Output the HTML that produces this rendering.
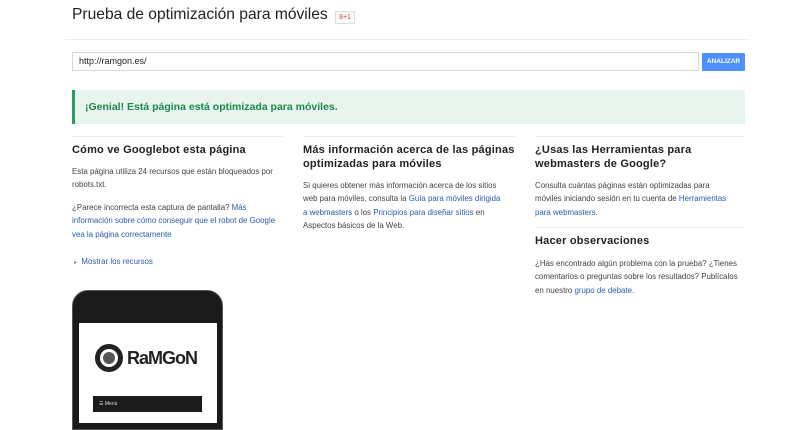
<!DOCTYPE html>
<html><head><meta charset="utf-8"><style>
body{margin:0;width:810px;height:421px;overflow:hidden;background:#fff;font-family:"Liberation Sans",Arial,sans-serif;color:#333;position:relative}
.a{position:absolute}
h1{position:absolute;left:72px;top:6px;margin:0;font-weight:normal;font-size:15.6px;color:#222;white-space:nowrap}
.g1{position:absolute;left:335px;top:11px;width:18px;height:11px;border:1px solid #ddd;font-size:7px;color:#d14836;text-align:center;line-height:11px;background:#fafafa}
.hr{position:absolute;height:1px;background:#eee}
.inp{left:72px;top:52px;width:619px;height:17px;border:1px solid #d9d9d9;font-size:9px;line-height:17px;padding-left:6px;color:#222}
.btn{left:702px;top:53px;width:43px;height:18px;background:#4d90fe;color:#fff;font-size:6.5px;font-weight:bold;text-align:center;line-height:18px;border-radius:1px}
.ok{left:72px;top:90px;height:34px;background:#e8f5ef;border-left:3px solid #23a05e;font-weight:bold;font-size:10.5px;color:#198a4a;line-height:34px;padding-left:10px;box-sizing:border-box;width:673px}
h3{position:absolute;margin:0;font-size:11px;font-weight:bold;color:#222;line-height:14px;letter-spacing:.2px}
p{position:absolute;margin:0;font-size:7.9px;line-height:13.3px;color:#444}
a{color:#2a5db0;text-decoration:none}
</style></head><body>
<h1>Prueba de optimización para móviles</h1>
<div class="g1">8+1</div>
<div class="hr" style="left:65px;top:39px;width:685px"></div>
<div class="a inp">http://ramgon.es/</div>
<div class="a btn">ANALIZAR</div>
<div class="a ok">¡Genial! Está página está optimizada para móviles.</div>

<div class="hr" style="left:72px;top:136px;width:211px"></div>
<div class="hr" style="left:303px;top:136px;width:212px"></div>
<div class="hr" style="left:535px;top:136px;width:210px"></div>
<div class="hr" style="left:535px;top:227px;width:210px"></div>

<h3 style="left:72px;top:143px">Cómo ve Googlebot esta página</h3>
<p style="left:72px;top:165px;width:212px">Esta página utiliza 24 recursos que están bloqueados por robots.txt.</p>
<p style="left:72px;top:201px;width:208px">¿Parece incorrecta esta captura de pantalla? <a>Más información sobre cómo conseguir que el robot de Google vea la página correctamente</a></p>
<p style="left:74px;top:255px"><span style="color:#888;font-size:6px">▸</span> &nbsp;<a>Mostrar los recursos</a></p>

<h3 style="left:303px;top:143px;width:220px">Más información acerca de las páginas optimizadas para móviles</h3>
<p style="left:303px;top:179px;width:200px">Si quieres obtener más información acerca de los sitios web para móviles, consulta la <a>Guía para móviles dirigida a webmasters</a> o los <a>Principios para diseñar sitios</a> en Aspectos básicos de la Web.</p>

<h3 style="left:535px;top:143px;width:215px">¿Usas las Herramientas para webmasters de Google?</h3>
<p style="left:535px;top:179px;width:192px">Consulta cuántas páginas están optimizadas para móviles iniciando sesión en tu cuenta de <a>Herramientas para webmasters</a>.</p>
<h3 style="left:535px;top:234px">Hacer observaciones</h3>
<p style="left:535px;top:257px;width:205px">¿Has encontrado algún problema con la prueba? ¿Tienes comentarios o preguntas sobre los resultados? Publícalos en nuestro <a>grupo de debate</a>.</p>

<div class="a" style="left:72px;top:290px;width:151px;height:140px;background:#1a1a1a;border-radius:16px 16px 0 0;border:1px solid #555;box-sizing:border-box"></div>
<div class="a" style="left:79px;top:323px;width:138px;height:100px;background:#fff"></div>
<div class="a" style="left:95px;top:344px;width:28px;height:28px;border:5px solid #222;border-radius:50%;box-sizing:border-box"></div>
<div class="a" style="left:103px;top:352px;width:12px;height:12px;background:#555;border-radius:50%"></div>
<div class="a" style="left:127px;top:346px;font-size:18px;font-weight:bold;color:#222;letter-spacing:-1px;line-height:24px">RaMGoN</div>
<div class="a" style="left:93px;top:396px;width:109px;height:16px;background:#1a1a1a;color:#ddd;font-size:5px;line-height:16px;padding-left:6px;box-sizing:border-box">☰ Menú</div>
</body></html>
